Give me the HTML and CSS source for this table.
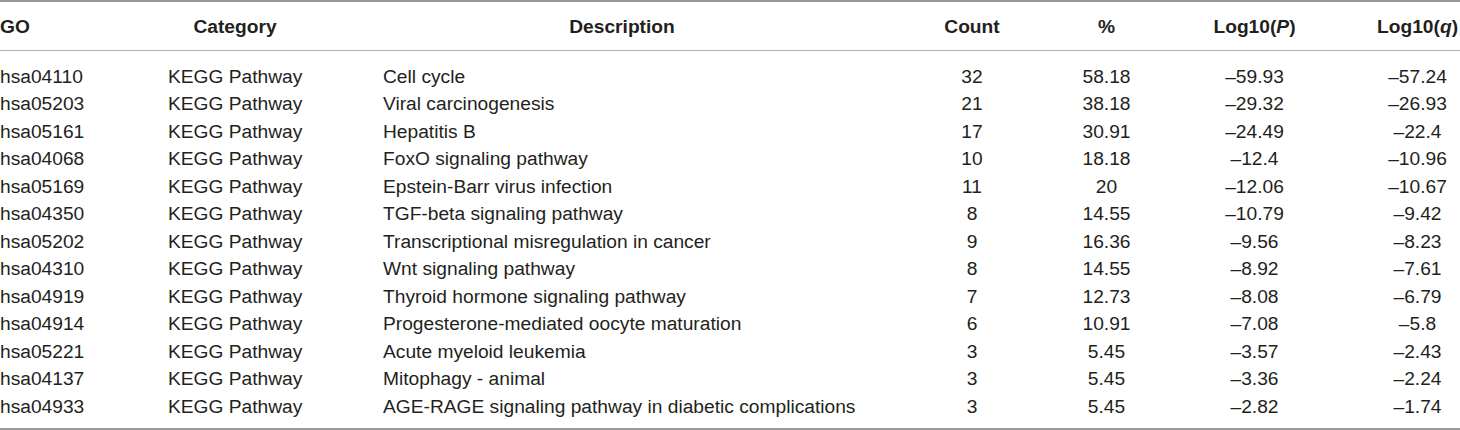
FILE: index.html
```html
<!DOCTYPE html>
<html>
<head>
<meta charset="utf-8">
<link rel="stylesheet" href="styles.css">
</head>
<body>
<table class="tbl">
  <colgroup>
    <col class="w-go">
    <col class="w-cat">
    <col class="w-desc">
    <col class="w-count">
    <col class="w-pct">
    <col class="w-p">
    <col class="w-q">
  </colgroup>
  <thead>
    <tr>
      <th class="c-go">GO</th>
      <th class="c-cat">Category</th>
      <th class="c-desc">Description</th>
      <th class="c-num">Count</th>
      <th class="c-num">%</th>
      <th class="c-num">Log10(<i>P</i>)</th>
      <th class="c-num c-q">Log10(<i>q</i>)</th>
    </tr>
  </thead>
  <tbody>
    <tr><td>hsa04110</td><td class="c-cat">KEGG Pathway</td><td class="c-desc">Cell cycle</td><td class="c-num">32</td><td class="c-num">58.18</td><td class="c-num">–59.93</td><td class="c-num c-q">–57.24</td></tr>
    <tr><td>hsa05203</td><td class="c-cat">KEGG Pathway</td><td class="c-desc">Viral carcinogenesis</td><td class="c-num">21</td><td class="c-num">38.18</td><td class="c-num">–29.32</td><td class="c-num c-q">–26.93</td></tr>
    <tr><td>hsa05161</td><td class="c-cat">KEGG Pathway</td><td class="c-desc">Hepatitis B</td><td class="c-num">17</td><td class="c-num">30.91</td><td class="c-num">–24.49</td><td class="c-num c-q">–22.4</td></tr>
    <tr><td>hsa04068</td><td class="c-cat">KEGG Pathway</td><td class="c-desc">FoxO signaling pathway</td><td class="c-num">10</td><td class="c-num">18.18</td><td class="c-num">–12.4</td><td class="c-num c-q">–10.96</td></tr>
    <tr><td>hsa05169</td><td class="c-cat">KEGG Pathway</td><td class="c-desc">Epstein-Barr virus infection</td><td class="c-num">11</td><td class="c-num">20</td><td class="c-num">–12.06</td><td class="c-num c-q">–10.67</td></tr>
    <tr><td>hsa04350</td><td class="c-cat">KEGG Pathway</td><td class="c-desc">TGF-beta signaling pathway</td><td class="c-num">8</td><td class="c-num">14.55</td><td class="c-num">–10.79</td><td class="c-num c-q">–9.42</td></tr>
    <tr><td>hsa05202</td><td class="c-cat">KEGG Pathway</td><td class="c-desc">Transcriptional misregulation in cancer</td><td class="c-num">9</td><td class="c-num">16.36</td><td class="c-num">–9.56</td><td class="c-num c-q">–8.23</td></tr>
    <tr><td>hsa04310</td><td class="c-cat">KEGG Pathway</td><td class="c-desc">Wnt signaling pathway</td><td class="c-num">8</td><td class="c-num">14.55</td><td class="c-num">–8.92</td><td class="c-num c-q">–7.61</td></tr>
    <tr><td>hsa04919</td><td class="c-cat">KEGG Pathway</td><td class="c-desc">Thyroid hormone signaling pathway</td><td class="c-num">7</td><td class="c-num">12.73</td><td class="c-num">–8.08</td><td class="c-num c-q">–6.79</td></tr>
    <tr><td>hsa04914</td><td class="c-cat">KEGG Pathway</td><td class="c-desc">Progesterone-mediated oocyte maturation</td><td class="c-num">6</td><td class="c-num">10.91</td><td class="c-num">–7.08</td><td class="c-num c-q">–5.8</td></tr>
    <tr><td>hsa05221</td><td class="c-cat">KEGG Pathway</td><td class="c-desc">Acute myeloid leukemia</td><td class="c-num">3</td><td class="c-num">5.45</td><td class="c-num">–3.57</td><td class="c-num c-q">–2.43</td></tr>
    <tr><td>hsa04137</td><td class="c-cat">KEGG Pathway</td><td class="c-desc">Mitophagy - animal</td><td class="c-num">3</td><td class="c-num">5.45</td><td class="c-num">–3.36</td><td class="c-num c-q">–2.24</td></tr>
    <tr><td>hsa04933</td><td class="c-cat">KEGG Pathway</td><td class="c-desc">AGE-RAGE signaling pathway in diabetic complications</td><td class="c-num">3</td><td class="c-num">5.45</td><td class="c-num">–2.82</td><td class="c-num c-q">–1.74</td></tr>
  </tbody>
</table>
</body>
</html>
```

FILE: styles.css
```css
html, body {
  margin: 0;
  padding: 0;
  background: #ffffff;
}

.tbl {
  border-collapse: collapse;
  table-layout: fixed;
  font-family: "Liberation Sans", Arial, sans-serif;
  font-size: 19.2px;
  line-height: 22px;
  color: #231f20;
  width: 1460px;
  border-top: 2px solid #9a9a9a;
  border-bottom: 2px solid #9a9a9a;
}

.w-go { width: 127px; }
.w-cat { width: 216px; }
.w-desc { width: 560px; }
.w-count { width: 138px; }
.w-pct { width: 131px; }
.w-p { width: 165px; }
.w-q { width: 123px; }

.tbl th,
.tbl td {
  padding: 0;
  white-space: nowrap;
  text-align: left;
}

.tbl th {
  font-weight: bold;
  padding-top: 14px;
  padding-bottom: 12px;
  border-bottom: 1px solid #b0b0b0;
}

.tbl th i {
  font-style: italic;
}

.tbl td {
  height: 27.5px;
}

.tbl .c-cat {
  padding-left: 41px;
  padding-right: 41px;
}

.tbl .c-desc {
  padding-left: 40px;
  padding-right: 42px;
}

.tbl th.c-cat,
.tbl th.c-desc,
.tbl .c-num {
  text-align: center;
}

.tbl .c-q {
  padding-left: 38px;
}

.tbl tbody tr:first-child td {
  padding-top: 12px;
}

.tbl tbody tr:last-child td {
  padding-bottom: 7px;
}
```
